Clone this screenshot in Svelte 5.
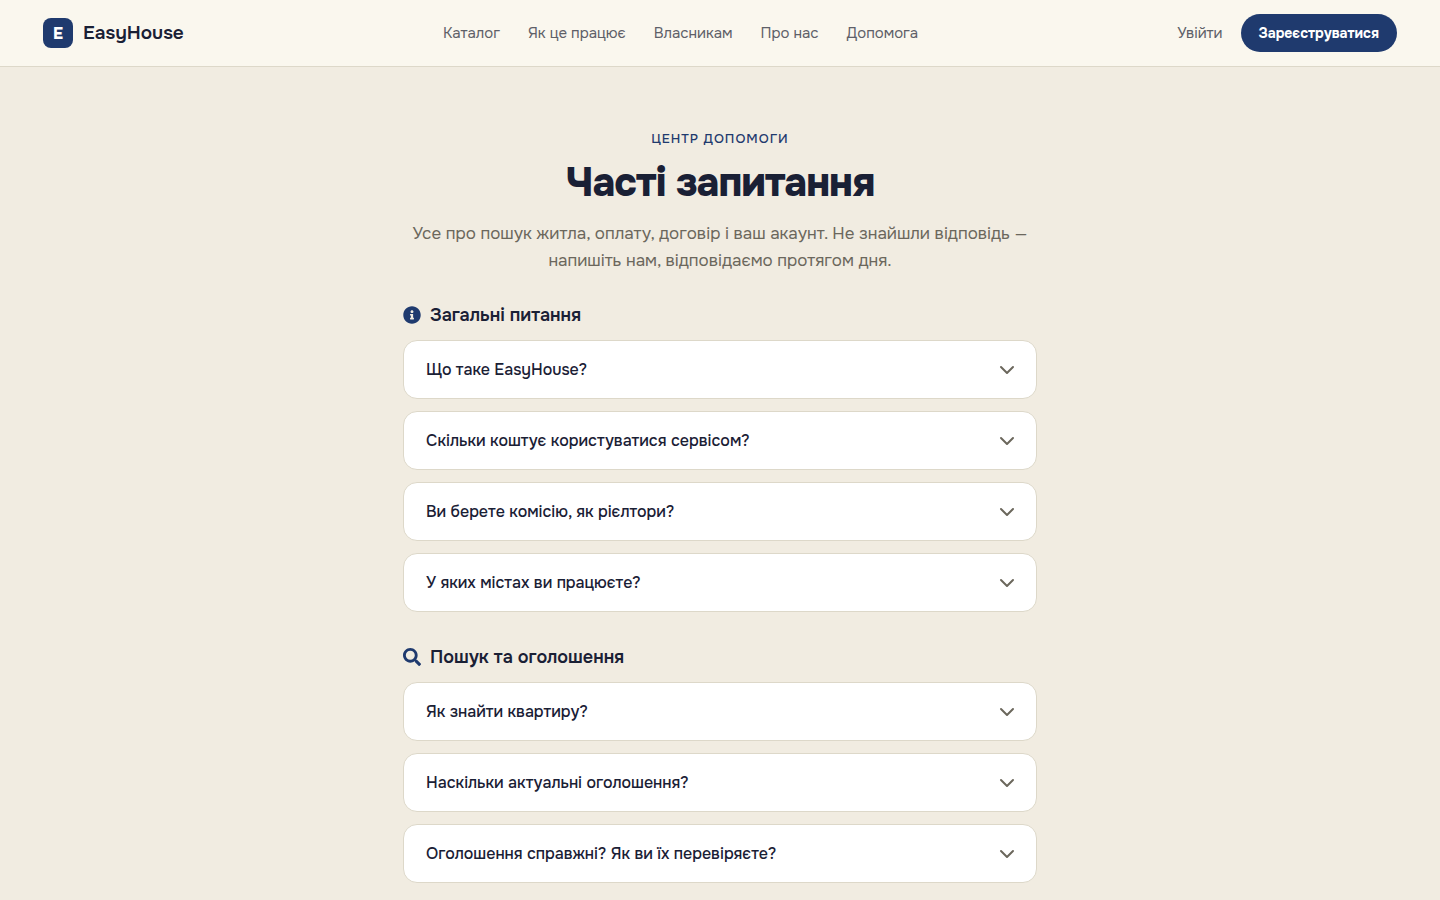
<script>
  const links = ['Каталог', 'Як це працює', 'Власникам', 'Про нас', 'Допомога']

  const sections = [
    {
      icon: 'info',
      title: 'Загальні питання',
      questions: [
        'Що таке EasyHouse?',
        'Скільки коштує користуватися сервісом?',
        'Ви берете комісію, як рієлтори?',
        'У яких містах ви працюєте?'
      ]
    },
    {
      icon: 'search',
      title: 'Пошук та оголошення',
      questions: [
        'Як знайти квартиру?',
        'Наскільки актуальні оголошення?',
        'Оголошення справжні? Як ви їх перевіряєте?'
      ]
    }
  ]

  let open = $state('')

  function toggle(question) {
    open = open === question ? '' : question
  }
</script>

<header>
  <a class="logo" href="/">
    <span class="mark">E</span>
    <span>EasyHouse</span>
  </a>
  <nav>
    {#each links as link}
      <a href="/">{link}</a>
    {/each}
  </nav>
  <div class="actions">
    <a href="/">Увійти</a>
    <button class="register">Зареєструватися</button>
  </div>
</header>

<main>
  <div class="intro">
    <p class="eyebrow">Центр допомоги</p>
    <h1>Часті запитання</h1>
    <p class="lead">Усе про пошук житла, оплату, договір і ваш акаунт. Не знайшли відповідь — напишіть нам, відповідаємо протягом дня.</p>
  </div>

  {#each sections as section}
    <section>
      <h2>
        <svg viewBox="0 0 512 512" aria-hidden="true">
          {#if section.icon === 'info'}
            <path d="M256 8C119 8 8 119 8 256s111 248 248 248 248-111 248-248S393 8 256 8zm0 110c23.200 0 42 18.800 42 42s-18.800 42-42 42-42-18.800-42-42 18.800-42 42-42zm56 254c0 6.600-5.400 12-12 12h-88c-6.600 0-12-5.400-12-12v-24c0-6.600 5.400-12 12-12h12v-64h-12c-6.600 0-12-5.400-12-12v-24c0-6.600 5.400-12 12-12h64c6.600 0 12 5.400 12 12v100h12c6.600 0 12 5.400 12 12v24z" />
          {:else}
            <path d="M505 442.700L405.300 343c-4.500-4.500-10.600-7-17-7H372c27.600-35.300 44-79.700 44-128C416 93.100 322.900 0 208 0S0 93.100 0 208s93.100 208 208 208c48.300 0 92.700-16.400 128-44v16.300c0 6.400 2.500 12.500 7 17l99.700 99.700c9.400 9.400 24.600 9.400 33.900 0l28.300-28.300c9.400-9.400 9.400-24.600.1-34zM208 336c-70.700 0-128-57.200-128-128 0-70.700 57.200-128 128-128 70.700 0 128 57.200 128 128 0 70.700-57.200 128-128 128z" />
          {/if}
        </svg>
        {section.title}
      </h2>
      <div class="list">
        {#each section.questions as question}
          <button class="question" aria-expanded={open === question} onclick={() => toggle(question)}>
            <span>{question}</span>
            <svg class="chevron" viewBox="0 0 16 16" aria-hidden="true">
              <path d="M2 5l6 6 6-6" />
            </svg>
          </button>
        {/each}
      </div>
    </section>
  {/each}
</main>

<style>
  :global(body) {
    background: #f1ece1;
    color: #1a2035;
    font-family: Onest, Inter, sans-serif;
  }
  a {
    color: inherit;
    text-decoration: none;
  }
  button {
    font-family: inherit;
    border: 0;
    cursor: pointer;
  }
  header {
    display: flex;
    align-items: center;
    justify-content: space-between;
    padding: 14px 43px;
    background: #faf7ee;
    border-bottom: 1px solid #ddd8c9;
  }
  .logo {
    display: flex;
    align-items: center;
    gap: 10px;
    font-size: 19px;
    font-weight: 600;
  }
  .mark {
    display: grid;
    place-items: center;
    width: 30px;
    height: 30px;
    border-radius: 8px;
    background: #1f3a6e;
    color: #fff;
    font-size: 16px;
    font-weight: 800;
  }
  nav {
    display: flex;
    gap: 28px;
    color: #5e6068;
    font-size: 15px;
  }
  .actions {
    display: flex;
    align-items: center;
    gap: 18px;
    color: #5e6068;
    font-size: 15px;
  }
  .register {
    height: 38px;
    padding: 0 18px;
    border-radius: 19px;
    background: #1f3a6e;
    color: #fff;
    font-size: 14px;
    font-weight: 700;
  }
  main {
    box-sizing: border-box;
    max-width: 720px;
    margin: 0 auto;
    padding: 64px 43px 16px;
  }
  .intro {
    text-align: center;
  }
  .eyebrow {
    margin: 0;
    color: #1f3a6e;
    font-size: 13px;
    font-weight: 500;
    line-height: 16px;
    letter-spacing: 1px;
    text-transform: uppercase;
  }
  h1 {
    margin: 12px 0 13px;
    font-size: 40px;
    font-weight: 800;
    line-height: 48px;
    letter-spacing: -1px;
  }
  .lead {
    margin: 0;
    color: #6b675c;
    font-size: 17px;
    line-height: 27px;
  }
  section {
    margin-top: 28px;
  }
  section + section {
    margin-top: 32px;
  }
  h2 {
    display: flex;
    align-items: center;
    gap: 9px;
    margin: 0 0 12px;
    font-size: 18px;
    font-weight: 600;
    line-height: 26px;
  }
  h2 svg {
    width: 18px;
    height: 18px;
    fill: #1f3a6e;
  }
  .list {
    display: flex;
    flex-direction: column;
    gap: 12px;
  }
  .question {
    display: flex;
    align-items: center;
    justify-content: space-between;
    padding: 17px 21px 16px 22px;
    border: 1px solid #ddd8c9;
    border-radius: 14px;
    background: #fff;
    color: #1a2035;
    font-size: 16px;
    font-weight: 500;
    line-height: 24px;
    text-align: left;
  }
  .chevron {
    width: 16px;
    height: 16px;
    fill: none;
    stroke: #6b675c;
    stroke-width: 2;
    stroke-linecap: round;
    stroke-linejoin: round;
  }
  .question[aria-expanded='true'] .chevron {
    transform: rotate(180deg);
  }
</style>
